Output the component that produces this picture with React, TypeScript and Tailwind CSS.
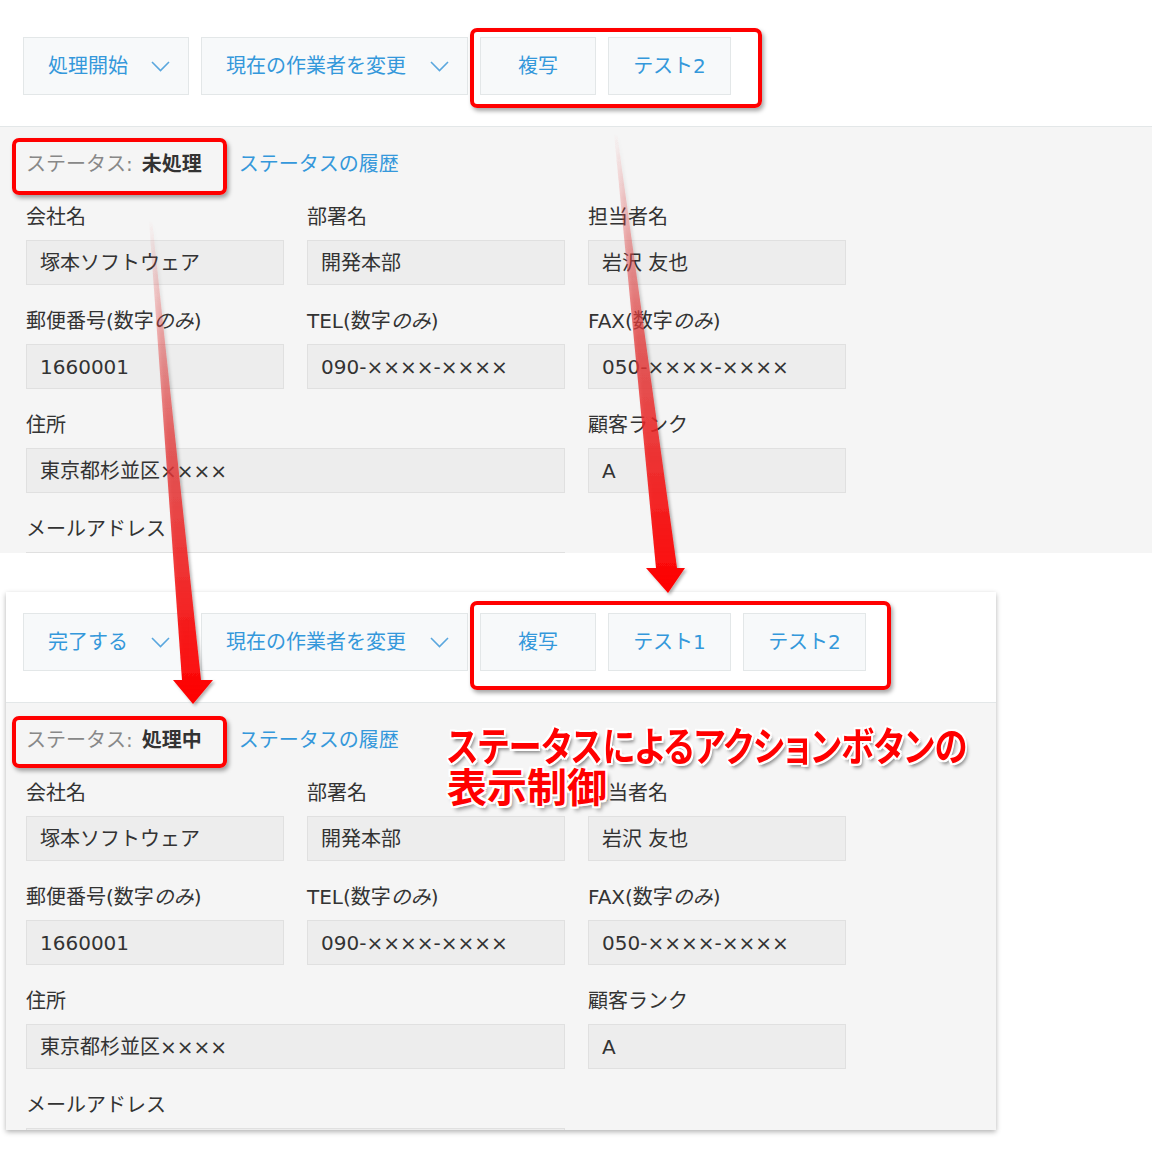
import React from 'react';

type Field = { label: React.ReactNode; value?: string; wide?: boolean };

const fields: Field[] = [
  { label: '会社名', value: '塚本ソフトウェア' },
  { label: '部署名', value: '開発本部' },
  { label: '担当者名', value: '岩沢 友也' },
  { label: <>郵便番号(数字<i>のみ</i>)</>, value: '1660001' },
  { label: <>TEL(数字<i>のみ</i>)</>, value: '090-××××-××××' },
  { label: <>FAX(数字<i>のみ</i>)</>, value: '050-××××-××××' },
  { label: '住所', value: '東京都杉並区××××', wide: true },
  { label: '顧客ランク', value: 'A' },
  { label: 'メールアドレス', value: '', wide: true },
];

function Chevron() {
  return (
    <svg width="19" height="11" viewBox="0 0 19 11" fill="none" className="shrink-0">
      <polyline points="1,1 9.5,9.5 18,1" stroke="#5aa7de" strokeWidth="1.6" />
    </svg>
  );
}

function MenuButton({ label, width }: { label: string; width: string }) {
  return (
    <div
      className={`${width} flex h-[58px] items-center justify-between border border-[#e3e7e8] bg-[#f7f9fa] pl-[24px] pr-[18px] text-[20px] text-[#3498db]`}
    >
      <span>{label}</span>
      <Chevron />
    </div>
  );
}

function ActionButton({ label, width }: { label: string; width: string }) {
  return (
    <div
      className={`${width} flex h-[58px] items-center justify-center border border-[#e3e7e8] bg-[#f7f9fa] text-[20px] text-[#3498db]`}
    >
      {label}
    </div>
  );
}

function RecordPanel({ top, action, extras, status }: { top: boolean; action: string; extras: string[]; status: string }) {
  return (
    <>
      <div
        className={
          top
            ? 'flex h-[127px] shrink-0 gap-[12px] border-b border-[#e3e7e8] bg-white pl-[23px] pt-[37px]'
            : 'flex h-[111px] shrink-0 gap-[12px] border-b border-[#e3e7e8] bg-white pl-[17px] pt-[21px]'
        }
      >
        <MenuButton label={action} width="w-[166px]" />
        <MenuButton label="現在の作業者を変更" width="w-[267px]" />
        {extras.map((e, i) => (
          <ActionButton key={e} label={e} width={i === 0 ? 'w-[116px]' : 'w-[123px]'} />
        ))}
      </div>
      <div className={top ? 'flex-1 bg-[#f5f5f5] pl-[26px] pt-[23px]' : 'flex-1 bg-[#f5f5f5] pl-[20px] pt-[23px]'}>
        <div className="flex h-[28px] items-center text-[20px] leading-[28px]">
          <span className="text-[#888]">ステータス: </span>
          <span className="ml-[9px] font-bold text-[#333]">{status}</span>
          <span className="ml-[37px] text-[#3498db]">ステータスの履歴</span>
        </div>
        <div className="mt-[25px] grid grid-cols-[258px_258px_258px] gap-x-[23px] gap-y-[22px]">
          {fields.map((f, i) => (
            <div key={i} className={f.wide ? 'col-span-2' : ''}>
              <div className="h-[28px] text-[20px] leading-[28px] text-[#333]">{f.label}</div>
              <div className="mt-[9px] flex h-[45px] items-center border border-[#e0e0e0] bg-[#ededed] pl-[13px] text-[20px] text-[#333]">
                {f.value}
              </div>
            </div>
          ))}
        </div>
      </div>
    </>
  );
}

function RedBox({ className }: { className: string }) {
  return (
    <div
      className={`absolute rounded-[7px] border-[4px] border-[#ff0000] shadow-[2px_3px_4px_rgba(0,0,0,0.35)] ${className}`}
    />
  );
}

export default function App() {
  return (
    <div className="relative h-[1152px] w-[1152px] overflow-hidden bg-white font-['DejaVu_Sans','Noto_Sans_CJK_JP',sans-serif]">
      {/* 未処理の画面 */}
      <div className="flex h-[553px] flex-col overflow-hidden">
        <RecordPanel top action="処理開始" extras={['複写', 'テスト2']} status="未処理" />
      </div>

      {/* 処理中の画面 */}
      <div className="ml-[6px] mt-[39px] flex h-[538px] w-[990px] flex-col overflow-hidden shadow-[0_2px_5px_rgba(0,0,0,0.3)]">
        <RecordPanel top={false} action="完了する" extras={['複写', 'テスト1', 'テスト2']} status="処理中" />
      </div>

      {/* 注釈 */}
      <RedBox className="left-[470px] top-[28px] h-[80px] w-[292px]" />
      <RedBox className="left-[12px] top-[138px] h-[57px] w-[215px]" />
      <RedBox className="left-[470px] top-[601px] h-[89px] w-[421px]" />
      <RedBox className="left-[12px] top-[716px] h-[52px] w-[215px]" />

      <svg className="pointer-events-none absolute left-0 top-0" width="1152" height="1152">
        <defs>
          <linearGradient id="a1" x1="0" y1="220" x2="0" y2="704" gradientUnits="userSpaceOnUse">
            <stop offset="0" stopColor="#e84545" stopOpacity="0" />
            <stop offset="0.45" stopColor="#e43b3b" stopOpacity="0.75" />
            <stop offset="1" stopColor="#ff0000" stopOpacity="1" />
          </linearGradient>
          <linearGradient id="a2" x1="0" y1="133" x2="0" y2="593" gradientUnits="userSpaceOnUse">
            <stop offset="0" stopColor="#e84545" stopOpacity="0" />
            <stop offset="0.45" stopColor="#e43b3b" stopOpacity="0.75" />
            <stop offset="1" stopColor="#ff0000" stopOpacity="1" />
          </linearGradient>
          <filter id="sh" x="-50%" y="-10%" width="200%" height="120%">
            <feDropShadow dx="2" dy="2" stdDeviation="1.5" floodOpacity="0.3" />
          </filter>
        </defs>
        <polygon points="149,220 152,220 201,680 213,680 193,704 173,680 182,680" fill="url(#a1)" filter="url(#sh)" />
        <polygon points="614,133 617,133 677,568 685,568 668,593 646,568 656,568" fill="url(#a2)" filter="url(#sh)" />
      </svg>

      <div className="absolute left-[447px] top-[724px] font-['Noto_Sans_CJK_JP',sans-serif] text-[40px] font-bold leading-[41px] text-[#ff0000] [text-shadow:2px_0_0_#fff,-2px_0_0_#fff,0_2px_0_#fff,0_-2px_0_#fff,2px_2px_0_#fff,-2px_-2px_0_#fff,2px_-2px_0_#fff,-2px_2px_0_#fff,3px_4px_4px_rgba(0,0,0,0.45)]">
        <div className="origin-left scale-x-[0.83] whitespace-nowrap [font-feature-settings:'palt']">
          ステータスによるアクションボタンの
        </div>
        <div>表示制御</div>
      </div>
    </div>
  );
}
